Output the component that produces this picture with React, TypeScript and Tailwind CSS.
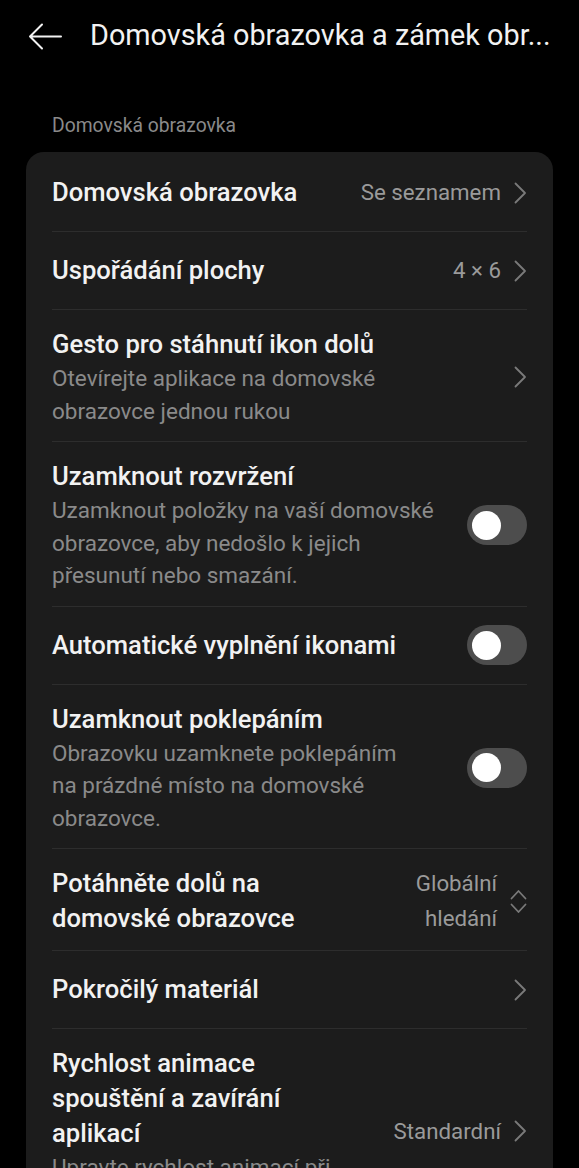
import React from 'react';

type Row = {
  title: string[];
  sub?: string[];
  value?: string[];
  right: 'chevron' | 'toggle' | 'updown';
  first?: boolean;
};

const rows: Row[] = [
  { title: ['Domovská obrazovka'], value: ['Se seznamem'], right: 'chevron', first: true },
  { title: ['Uspořádání plochy'], value: ['4 × 6'], right: 'chevron' },
  {
    title: ['Gesto pro stáhnutí ikon dolů'],
    sub: ['Otevírejte aplikace na domovské', 'obrazovce jednou rukou'],
    right: 'chevron',
  },
  {
    title: ['Uzamknout rozvržení'],
    sub: ['Uzamknout položky na vaší domovské', 'obrazovce, aby nedošlo k jejich', 'přesunutí nebo smazání.'],
    right: 'toggle',
  },
  { title: ['Automatické vyplnění ikonami'], right: 'toggle' },
  {
    title: ['Uzamknout poklepáním'],
    sub: ['Obrazovku uzamknete poklepáním', 'na prázdné místo na domovské', 'obrazovce.'],
    right: 'toggle',
  },
  {
    title: ['Potáhněte dolů na', 'domovské obrazovce'],
    value: ['Globální', 'hledání'],
    right: 'updown',
  },
  { title: ['Pokročilý materiál'], right: 'chevron' },
  {
    title: ['Rychlost animace', 'spouštění a zavírání', 'aplikací'],
    sub: ['Upravte rychlost animací při', 'otevírání a zavírání aplikací.'],
    value: ['Standardní'],
    right: 'chevron',
  },
];

function Chevron() {
  return (
    <svg width="13" height="22" viewBox="0 0 13 22" fill="none" className="shrink-0">
      <path d="M1.5 1.5 L11 11 L1.5 20.5" stroke="#7a7a7a" strokeWidth="1.8" strokeLinecap="round" strokeLinejoin="round" />
    </svg>
  );
}

function UpDown() {
  return (
    <svg width="17" height="25" viewBox="0 0 17 25" fill="none" className="shrink-0">
      <path d="M1.5 9.5 L8.5 2 L15.5 9.5" stroke="#7a7a7a" strokeWidth="1.8" strokeLinecap="round" strokeLinejoin="round" />
      <path d="M1.5 15.5 L8.5 23 L15.5 15.5" stroke="#7a7a7a" strokeWidth="1.8" strokeLinecap="round" strokeLinejoin="round" />
    </svg>
  );
}

function Toggle() {
  return (
    <div className="w-[60px] h-[40px] -my-[3px] rounded-full bg-[#4d4d4d] flex items-center pl-[5px] shrink-0">
      <div className="w-[29px] h-[29px] rounded-full bg-white" />
    </div>
  );
}

function SettingRow({ row }: { row: Row }) {
  const multi = row.title.length > 1 || !!row.sub;
  const pad = row.first ? 'pt-[23px] pb-[21px]' : multi ? 'pt-[17px] pb-[14px]' : 'py-[21px]';
  return (
    <div className={`flex items-center px-[26px] ${pad}`}>
      <div className="flex-1 min-w-0">
        <div className="text-[25.6px] leading-[35px] font-medium text-[#f2f2f2]">
          {row.title.map((t, i) => (
            <div key={i} className="whitespace-nowrap">{t}</div>
          ))}
        </div>
        {row.sub && (
          <div className="text-[22.5px] leading-[32.5px] text-[#8a8a8a]">
            {row.sub.map((t, i) => (
              <div key={i} className="whitespace-nowrap">{t}</div>
            ))}
          </div>
        )}
      </div>
      <div className="flex items-center gap-[13px] pl-[16px]">
        {row.value && (
          <div className="text-[22.3px] leading-[35px] text-[#9a9a9a] text-right">
            {row.value.map((t, i) => (
              <div key={i} className="whitespace-nowrap">{t}</div>
            ))}
          </div>
        )}
        {row.right === 'chevron' && <Chevron />}
        {row.right === 'updown' && <UpDown />}
        {row.right === 'toggle' && <Toggle />}
      </div>
    </div>
  );
}

export default function App() {
  return (
    <div
      className="w-[579px] h-[1168px] overflow-hidden bg-black text-white"
      style={{ fontFamily: 'Roboto, "Liberation Sans", sans-serif' }}
    >
      <div className="h-[72px] flex items-center pl-[28px]">
        <svg width="34" height="27" viewBox="0 0 34 27" fill="none" className="shrink-0">
          <path d="M33 13.5 H2 M14 1.5 L2 13.5 L14 25.5" stroke="#f2f2f2" strokeWidth="2" strokeLinecap="round" strokeLinejoin="round" />
        </svg>
        <div className="ml-[28px] text-[28.8px] text-[#f2f2f2] whitespace-nowrap">
          Domovská obrazovka a zámek obr...
        </div>
      </div>

      <div className="mt-[43px] px-[52px] text-[19.3px] leading-[22px] text-[#8a8a8a]">Domovská obrazovka</div>

      <div className="mt-[15px] mx-[26px] rounded-[18px] bg-[#1c1c1c]">
        {rows.map((row, i) => (
          <div key={i}>
            {i > 0 && <div className="mx-[26px] h-px bg-[#2d2d2d]" />}
            <SettingRow row={row} />
          </div>
        ))}
      </div>
    </div>
  );
}
